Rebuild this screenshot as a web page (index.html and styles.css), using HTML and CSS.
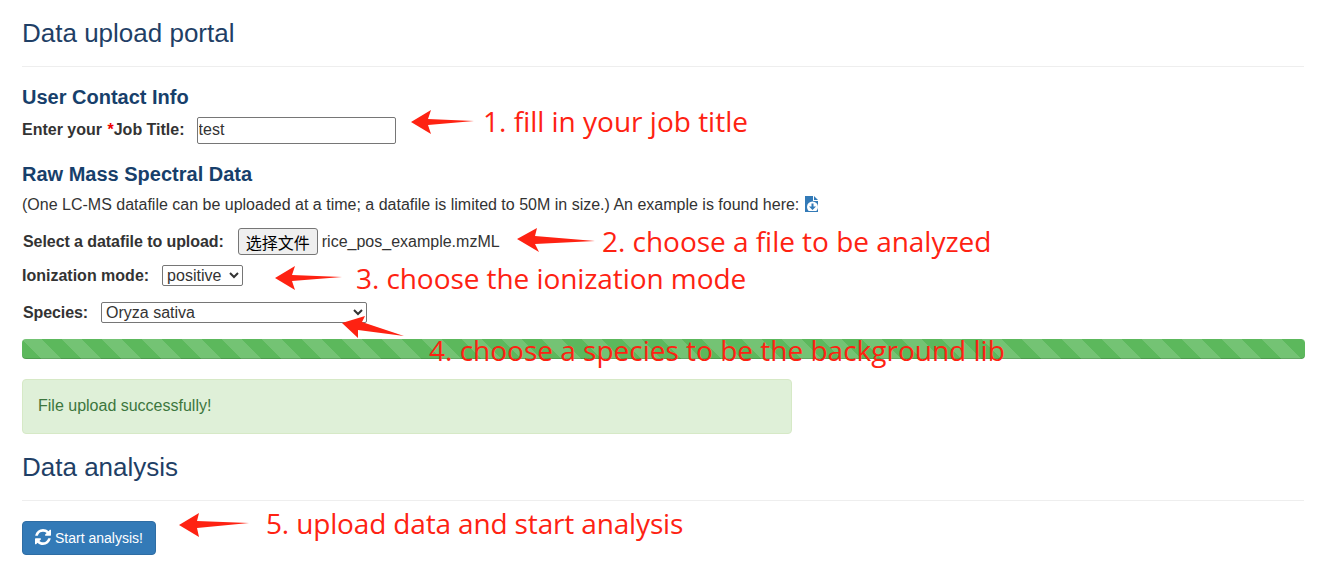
FILE: index.html
```html
<!DOCTYPE html>
<html>
<head>
	<title>Data upload portal</title>
	<meta charset=utf-8>
	<link rel="stylesheet" href="styles.css">
</head>
<body>
	<div id="wrap">
		<h3 class="title">Data upload portal</h3>
		<hr class="line">

		<h4 class="sub sub-first">User Contact Info</h4>
		<div class="row row-job">
			<label class="lbl lbl-job">Enter your <span class="star">*</span>Job Title:</label>
			<input class="txt" type="text" value="test">
		</div>

		<h4 class="sub sub-raw">Raw Mass Spectral Data</h4>
		<p class="note">(One LC-MS datafile can be uploaded at a time; a datafile is limited to 50M in size.) An example is found here:
			<svg class="fileicon" viewBox="0 0 14 17" width="14" height="17">
				<path fill="#337ab7" d="M0 0H8V5H13V16H0Z"/>
				<path fill="#337ab7" d="M9 0L13 4H9Z"/>
				<circle fill="#fff" cx="7.5" cy="11" r="5.5"/>
				<path fill="#337ab7" d="M6.5 7.5H8.5V10.5H11L7.5 14L4 10.500H6.500Z"/>
				<path fill="#337ab7" d="M3 15H12V16H3Z"/>
			</svg>
		</p>

		<div class="row row-file">
			<label class="lbl lbl-file">Select a datafile to upload:</label>
			<button class="filebtn">选择文件</button>
			<span class="filename">rice_pos_example.mzML</span>
		</div>
		<div class="row row-ion">
			<label class="lbl lbl-ion">Ionization mode:</label>
			<select class="sel sel-ion"><option>positive</option></select>
		</div>
		<div class="row row-species">
			<label class="lbl lbl-species">Species:</label>
			<select class="sel sel-species"><option>Oryza sativa</option></select>
		</div>

		<div class="progress"></div>
		<div class="alert">File upload successfully!</div>

		<h3 class="title title-analysis">Data analysis</h3>
		<hr class="line">
		<button class="startbtn">
			<svg class="refresh" viewBox="0 0 1536 1536" width="16" height="16">
				<path fill="#fff" d="M1511 928q0 5-1 7-64 268-268 434.500t-478 166.500q-146 0-282.500-55t-243.500-157l-129 129q-19 19-45 19t-45-19-19-45v-448q0-26 19-45t45-19h448q26 0 45 19t19 45-19 45l-137 137q71 66 161 102t187 36q134 0 250-65t186-179q11-17 53-117 8-23 30-23h192q13 0 22.500 9.500t9.500 22.500zM1536 128v448q0 26-19 45t-45 19h-448q-26 0-45-19t-19-45 19-45l138-138q-148-137-349-137-134 0-250 65t-186 179q-11 17-53 117-8 23-30 23h-199q-13 0-22.500-9.500t-9.500-22.500v-7q65-268 270-434.500t480-166.500q146 0 284 55.500t245 156.500l130-129q19-19 45-19t45 19 19 45z"/>
			</svg>
			Start analysis!
		</button>
	</div>

	<!-- arrows and notes drawn on top of the screenshot -->
	<svg class="arrow arrow1" viewBox="0 0 64 24" width="64" height="24"><path d="M0 12L20 0L17 9L63 11L17 15L20 24Z"/></svg>
	<span class="hint hint1">1. fill in your job title</span>
	<svg class="arrow arrow2" viewBox="0 0 80 24" width="80" height="24"><path d="M0 11L20 0L18 8L78 13L18 16L22 24Z"/></svg>
	<span class="hint hint2">2. choose a file to be analyzed</span>
	<svg class="arrow arrow3" viewBox="0 0 68 24" width="68" height="24"><path d="M0 12L20 0L17 9L67 11L17 15L20 24Z"/></svg>
	<span class="hint hint3">3. choose the ionization mode</span>
	<svg class="arrow arrow4" viewBox="0 0 64 24" width="64" height="24"><path d="M1 8L24 1L21 7L63 21L17 15L17 23Z"/></svg>
	<span class="hint hint4">4. choose a species to be the background lib</span>
	<svg class="arrow arrow5" viewBox="0 0 70 24" width="70" height="24"><path d="M0 12L20 0L18 8L70 10L18 15L20 24Z"/></svg>
	<span class="hint hint5">5. upload data and start analysis</span>
</body>
</html>
```

FILE: styles.css
```css
body{
	margin: 0;
	font-family: "Liberation Sans", Arial, sans-serif;
	font-size: 14px;
	line-height: 20px;
	color: #333;
	background: #fff;
	position: relative;
	height: 574px;
	overflow: hidden;
}
#wrap{
	padding: 0 18px 0 22px;
}
.title{
	margin: 0;
	padding-top: 20px;
	font-size: 26px;
	line-height: 26px;
	font-weight: 500;
	color: #1f3f66;
}
.line{
	margin: 20px 0 0;
	border: 0;
	border-top: 1px solid #eee;
}
.sub{
	margin: 0;
	font-size: 20px;
	line-height: 22px;
	font-weight: bold;
	color: #173f6b;
}
.sub-first{
	padding-top: 19px;
}
.sub-raw{
	padding-top: 20px;
}
.row{
	display: flex;
	align-items: center;
}
.lbl{
	font-size: 16px;
	font-weight: bold;
}
.star{
	color: #e00;
	margin-left: 1px;
}
.row-job{
	margin-top: 9px;
	height: 26px;
}
.lbl-job{
	margin-right: 12px;
}
.txt{
	box-sizing: border-box;
	width: 199px;
	height: 27px;
	padding: 1px;
	border: 1px solid #767676;
	border-radius: 2px;
	font: 16px "Liberation Sans", Arial, sans-serif;
	color: #333;
}
.note{
	margin: 9px 0 0;
	font-size: 16px;
	line-height: 22px;
	height: 22px;
}
.fileicon{
	vertical-align: -3px;
	margin-left: 1px;
}
.row-file{
	margin-top: 12px;
	height: 27px;
}
.lbl-file{
	margin-left: 1px;
	margin-right: 14px;
	letter-spacing: -.07px;
}
.filebtn{
	box-sizing: border-box;
	width: 80px;
	height: 27px;
	padding: 0;
	border: 1px solid #767676;
	border-radius: 3px;
	background: #efefef;
	font: 16px "Noto Sans CJK SC", sans-serif;
	color: #000;
}
.filename{
	margin-left: 4px;
	font-size: 16px;
}
.row-ion{
	margin-top: 10px;
	height: 21px;
}
.lbl-ion{
	margin-right: 13px;
}
.sel{
	box-sizing: border-box;
	height: 21px;
	padding: 0;
	border: 1px solid #767676;
	border-radius: 2px;
	background: #fff;
	font: 16px "Liberation Sans", Arial, sans-serif;
	color: #333;
}
.sel-ion{
	width: 81px;
}
.row-species{
	margin-top: 16px;
	height: 21px;
}
.lbl-species{
	margin-left: 1px;
	margin-right: 13px;
	letter-spacing: -.1px;
}
.sel-species{
	width: 266px;
}
.progress{
	height: 20px;
	margin-top: 16px;
	margin-right: -1px;
	border-radius: 4px;
	background-color: #5cb85c;
	background-image: linear-gradient(45deg, rgba(255,255,255,.15) 25%, transparent 25%, transparent 50%, rgba(255,255,255,.15) 50%, rgba(255,255,255,.15) 75%, transparent 75%, transparent);
	background-size: 40px 40px;
	box-shadow: inset 0 -1px 0 rgba(0,0,0,.15);
}
.alert{
	box-sizing: border-box;
	width: 770px;
	height: 55px;
	margin-top: 20px;
	padding: 14px 15px;
	border: 1px solid #d6e9c6;
	border-radius: 4px;
	background: #dff0d8;
	color: #3c763d;
	font-size: 16px;
	line-height: 24px;
}
.title-analysis{
	padding-top: 20px;
}
.startbtn{
	display: flex;
	align-items: center;
	gap: 4px;
	box-sizing: border-box;
	width: 134px;
	height: 34px;
	margin-top: 20px;
	padding: 0 12px;
	border: 1px solid #2e6da4;
	border-radius: 4px;
	background: #337ab7;
	color: #fff;
	font: 14px "Liberation Sans", Arial, sans-serif;
	white-space: nowrap;
}
.refresh{
	margin-top: -3px;
}
.arrow{
	position: absolute;
	fill: #fe2212;
}
.hint{
	position: absolute;
	font-family: "Open Sans", sans-serif;
	font-size: 28px;
	line-height: 38px;
	color: #fe2212;
	white-space: nowrap;
}
.arrow1{ left: 411px; top: 110px; }
.hint1{ left: 483px; top: 102px; }
.arrow2{ left: 517px; top: 228px; }
.hint2{ left: 602px; top: 222px; letter-spacing: -.03px; }
.arrow3{ left: 275px; top: 266px; }
.hint3{ left: 356px; top: 259px; letter-spacing: -.07px; }
.arrow4{ left: 341px; top: 315px; }
.hint4{ left: 429px; top: 331px; }
.arrow5{ left: 179px; top: 513px; }
.hint5{ left: 266px; top: 504px; letter-spacing: -.15px; }
```
